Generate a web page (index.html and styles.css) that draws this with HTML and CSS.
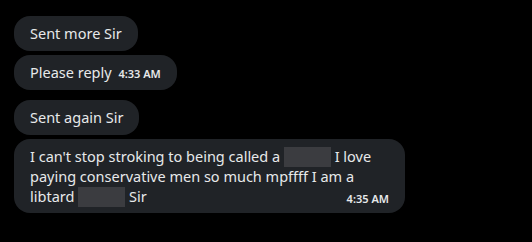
FILE: index.html
```html
<!DOCTYPE html>
<html lang="en">
<head>
    <meta charset="UTF-8">
    <title>Messages</title>
    <link rel="stylesheet" href="styles.css">
</head>
<body>
    <div class="thread">
        <div class="group">
            <div class="bubble">Sent more Sir</div>
            <div class="bubble">Please reply <span class="time">4:33 AM</span></div>
        </div>
        <div class="group">
            <div class="bubble">Sent again Sir</div>
            <div class="bubble long">
                <p class="text">I can't stop stroking to being called a <span class="blur"></span> I love paying conservative men so much mpffff I am a libtard <span class="blur"></span> Sir</p>
                <span class="time">4:35 AM</span>
            </div>
        </div>
    </div>
</body>
</html>
```
FILE: styles.css
```css
body {
    margin: 0;
    background-color: #000;
    font-family: "Noto Sans", "Open Sans", sans-serif;
    color: #e7e9ea;
}

.thread {
    display: flex;
    flex-direction: column;
    gap: 10px;
    padding: 16px 14px;
}

.group {
    display: flex;
    flex-direction: column;
    align-items: flex-start;
    gap: 4px;
}

.bubble {
    background-color: #202327;
    border-radius: 16px;
    padding: 8px 16px;
    font-size: 14.5px;
    line-height: 19px;
    height: 19px;
}

.time {
    font-size: 11px;
    font-weight: 600;
    line-height: 1;
    color: #e7e9ea;
    margin-left: 3px;
}

.long {
    width: 359px;
    height: auto;
    padding: 8px 16px 6px;
}

.text {
    margin: 0;
    line-height: 19.5px;
}

.long .time {
    display: block;
    text-align: right;
    margin-top: -16px;
    line-height: 16px;
}

.blur {
    display: inline-block;
    width: 47px;
    height: 20px;
    vertical-align: -5px;
    background-color: #3b3c40;
}
```
